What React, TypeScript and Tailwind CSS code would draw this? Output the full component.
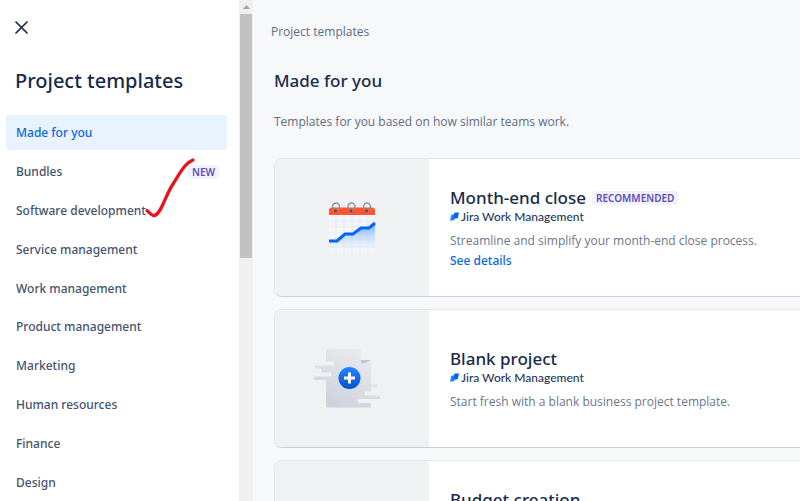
const categories = [
  "Made for you",
  "Bundles",
  "Software development",
  "Service management",
  "Work management",
  "Product management",
  "Marketing",
  "Human resources",
  "Finance",
  "Design",
];

function CloseIcon() {
  return (
    <svg viewBox="0 0 13 13" className="size-[13px]" aria-hidden="true">
      <path
        d="M1 1 12 12M12 1 1 12"
        stroke="#172b4d"
        strokeWidth="1.7"
        strokeLinecap="round"
      />
    </svg>
  );
}

function CalendarArt() {
  return (
    <svg viewBox="0 0 50 52" className="h-[52px] w-[50px]" aria-hidden="true">
      <defs>
        <linearGradient id="area" x1="0" y1="0" x2="0" y2="1">
          <stop offset="0" stopColor="#4c9aff" stopOpacity="0.8" />
          <stop offset="1" stopColor="#deebff" stopOpacity="0" />
        </linearGradient>
      </defs>
      <path d="M2 9h46v39a3 3 0 0 1-3 3H5a3 3 0 0 1-3-3z" fill="#f4f6f9" />
      <path
        d="M2 19h46M2 25h46M2 31h46M2 38h46M2 45h46M9 13v38M17 13v38M25 13v38M33 13v38M41 13v38"
        stroke="#dfe7f1"
        strokeWidth="0.6"
      />
      <path
        d="M2 39h8l8-7h8l8-6h8l6-5v27a3 3 0 0 1-3 3H5a3 3 0 0 1-3-3z"
        fill="url(#area)"
      />
      <path
        d="M2 39h8l8-7h8l8-6h8l6-5"
        fill="none"
        stroke="#0065ff"
        strokeWidth="3"
      />
      <path d="M2 13V8.500a3 3 0 0 1 3-3h40a3 3 0 0 1 3 3V13z" fill="#ff5630" />
      <g fill="none" stroke="#8590a2" strokeWidth="1.300">
        <path d="M6.500 7a3.500 3.500 0 1 1 3 1" />
        <path d="M22 7a3.500 3.500 0 1 1 3 1" />
        <path d="M37.500 7a3.500 3.500 0 1 1 3 1" />
      </g>
      <g fill="#42526e">
        <circle cx="8.500" cy="9" r="1.400" />
        <circle cx="24" cy="9" r="1.400" />
        <circle cx="39.500" cy="9" r="1.400" />
      </g>
    </svg>
  );
}

function BlankArt() {
  return (
    <svg viewBox="0 0 78 66" className="h-[66px] w-[78px]" aria-hidden="true">
      <defs>
        <linearGradient
          id="sheet"
          gradientUnits="userSpaceOnUse"
          x1="48"
          y1="3"
          x2="20"
          y2="61"
        >
          <stop offset="0" stopColor="#e9ebef" />
          <stop offset="1" stopColor="#cdd1da" />
        </linearGradient>
        <linearGradient id="plus" x1="0" y1="0" x2="0" y2="1">
          <stop offset="0" stopColor="#2684ff" />
          <stop offset="1" stopColor="#0052cc" />
        </linearGradient>
      </defs>
      <path
        d="M13 3h35v11h10v31.500h-6v4h15v3.500H45v4h13v4.500H13V34H1v-3.500h17v-4H8v-4H2v-3h19v-4h-8z"
        fill="url(#sheet)"
      />
      <path d="M48 14h10l-9 4z" fill="#c1c4ca" />
      <path d="M58 38h7v3.500h-7z" fill="#e3e5ea" />
      <circle cx="36.500" cy="32" r="11" fill="url(#plus)" />
      <path d="M36.500 26.500v11M31 32h11" stroke="#fff" strokeWidth="3" />
    </svg>
  );
}

function WorkManagement() {
  return (
    <div className="flex items-center gap-[2px] text-[#253858]">
      <svg viewBox="0 0 9 9" className="size-[9px]" aria-hidden="true">
        <path
          d="M2.200 2.500H6L4.500 7.300Q4.100 8.500 3 8.500H0L1 3.800Q1.200 2.500 2.200 2.500z"
          fill="#2684ff"
        />
        <path
          d="M5.300 0.500H9L8 5.200Q7.700 6.500 6.500 6.500H3L4 1.700Q4.300 0.500 5.300 0.500z"
          fill="#0065ff"
        />
      </svg>
      <span className="font-['Lato','Liberation_Sans',sans-serif] text-[12px] leading-[16px] font-medium">
        Jira Work Management
      </span>
    </div>
  );
}

function Badge({ label }: { label: string }) {
  return (
    <span className="rounded-[3px] bg-[#f3f0ff] px-1 text-[10px] leading-[14px] font-semibold text-[#5e4db2]">
      {label}
    </span>
  );
}

const templates = [
  {
    name: "Month-end close",
    text: "Streamline and simplify your month-end close process.",
    art: <CalendarArt />,
    recommended: true,
    details: true,
  },
  {
    name: "Blank project",
    text: "Start fresh with a blank business project template.",
    art: <BlankArt />,
    recommended: false,
    details: false,
  },
  {
    name: "Budget creation",
    text: "Plan and track every budget request.",
    art: null,
    recommended: false,
    details: true,
  },
];

export default function App() {
  return (
    <div className="flex h-screen overflow-hidden bg-[#f7f8f9] font-['Noto_Sans','Open_Sans',sans-serif] text-[#172b4d]">
      <aside className="relative flex w-[239px] shrink-0 flex-col bg-white">
        <button className="mt-[21px] ml-[15px] self-start" aria-label="Close">
          <CloseIcon />
        </button>
        <h1 className="mt-8 ml-[15px] text-[20px] leading-[30px] font-medium">
          Project templates
        </h1>
        <nav className="mt-[17px] flex-1">
          <ul className="flex h-full flex-col pr-3 pl-[6px]">
            {categories.map((name, i) => (
              <li key={name} className="flex flex-1 py-[2px]">
                <a
                  href="#"
                  className={`flex flex-1 items-center justify-between rounded-[3px] pt-[2px] pr-2 pl-[10px] text-[12px] font-medium ${
                    i === 0 ? "bg-[#e9f2ff] text-[#0c66e4]" : "text-[#44546f]"
                  }`}
                >
                  {name}
                  {name === "Bundles" && <Badge label="NEW" />}
                </a>
              </li>
            ))}
          </ul>
        </nav>
        <svg
          viewBox="0 0 52 62"
          className="pointer-events-none absolute top-[157px] left-[144px] h-[62px] w-[52px]"
          aria-hidden="true"
        >
          <path
            d="M3 53.500C6 56 8 59.500 11 58.500C18 55 21 39 29 27C36 16 41 6 49 3"
            fill="none"
            stroke="#e8141b"
            strokeWidth="3.300"
            strokeLinecap="round"
          />
        </svg>
      </aside>

      <div className="flex w-[14px] shrink-0 flex-col items-center bg-[#f0f0f0]">
        <svg viewBox="0 0 14 14" className="size-[14px]" aria-hidden="true">
          <path d="M4 9 7.500 5 11 9z" fill="#a3a3a3" />
        </svg>
        <div className="h-[244px] w-3 bg-[#c1c1c1]" />
      </div>

      <main className="min-w-0 flex-1 pl-[21px]">
        <p className="-ml-[3px] pt-[22px] font-['Open_Sans',sans-serif] text-[12px] leading-[20px] text-[#5e6c84]">
          Project templates
        </p>
        <h2 className="mt-[26px] text-[17px] leading-[26px] font-medium">
          Made for you
        </h2>
        <p className="mt-[18px] font-['Open_Sans',sans-serif] text-[12px] leading-[20px] text-[#5e6c84]">
          Templates for you based on how similar teams work.
        </p>
        <div className="mt-[26px] flex flex-col gap-3">
          {templates.map((t) => (
            <article
              key={t.name}
              className="flex h-[139px] shrink-0 overflow-hidden rounded-l-[8px] border border-r-0 border-[#e4e6ea] border-b-[#c9ced8] bg-white"
            >
              <div className="flex w-[154px] shrink-0 items-center justify-center bg-[#f0f1f3]">
                {t.art}
              </div>
              <div className="flex flex-1 flex-col justify-center pt-[2px] pl-[21px]">
                <div className="flex items-center gap-[6px]">
                  <h3 className="text-[17px] leading-[22px] font-medium">
                    {t.name}
                  </h3>
                  {t.recommended && <Badge label="RECOMMENDED" />}
                </div>
                <WorkManagement />
                <p className="mt-[6px] font-['Open_Sans',sans-serif] text-[12px] leading-[20px] text-[#6b778c]">
                  {t.text}
                </p>
                {t.details && (
                  <a
                    href="#"
                    className="self-start text-[12px] leading-[20px] font-medium text-[#0c66e4]"
                  >
                    See details
                  </a>
                )}
              </div>
            </article>
          ))}
        </div>
      </main>
    </div>
  );
}
